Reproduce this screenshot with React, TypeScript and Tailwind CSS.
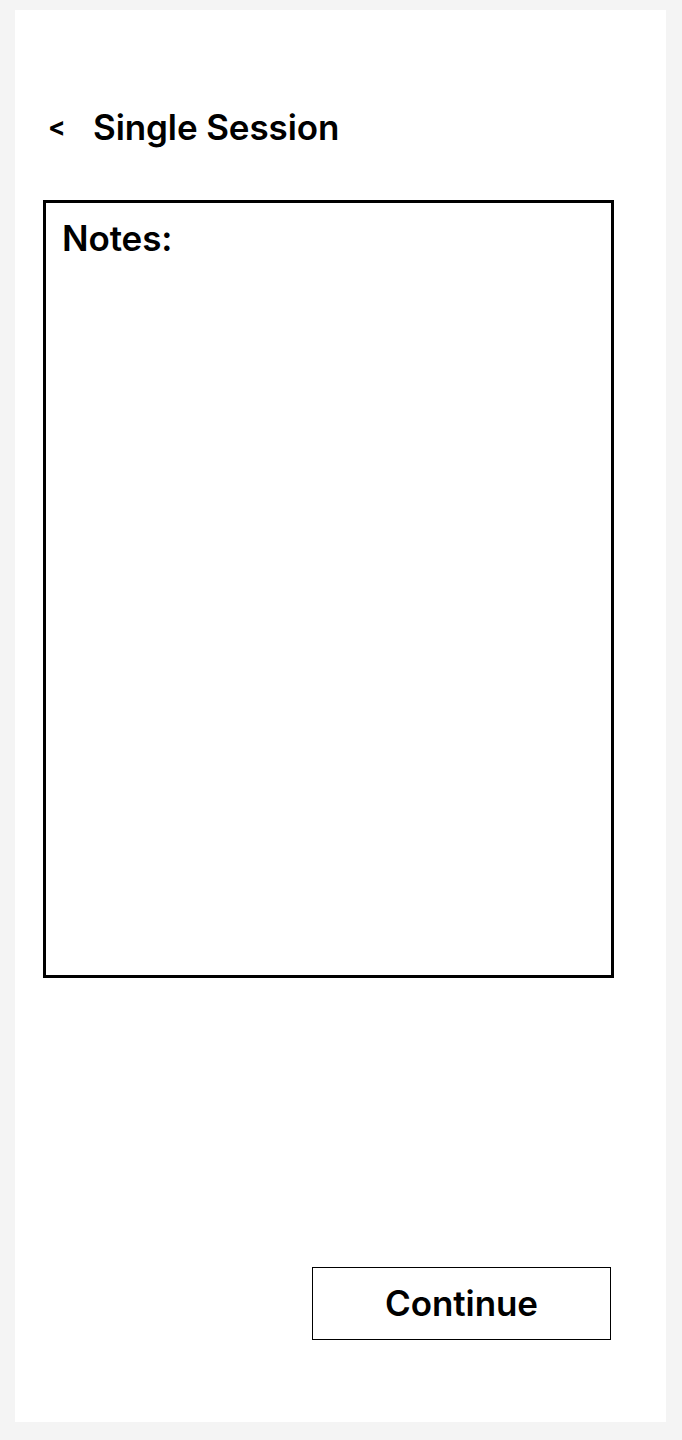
import React from "react";

export default function App() {
  return (
    <div
      className="min-h-[1440px] w-[682px] bg-[#f4f4f4] pt-[10px] pl-[15px] pr-[16px] pb-[18px]"
      style={{ fontFamily: "Inter, 'Noto Sans', sans-serif" }}
    >
      <div className="flex h-[1412px] flex-col bg-white">
        {/* header */}
        <div className="mt-[97px] flex h-[40px] items-center pl-[33px] text-black">
          <span className="w-[45px] text-[26px] font-bold leading-none">&lt;</span>
          <h1 className="text-[35px] font-semibold leading-none tracking-[-0.1px]">Single Session</h1>
        </div>

        {/* notes area */}
        <div className="ml-[28px] mt-[53px] h-[778px] w-[571px] border-[3px] border-black px-[16px] pt-[18px]">
          <p className="text-[35px] font-semibold leading-none tracking-[-0.1px] text-black">Notes:</p>
        </div>

        <div className="flex-1" />

        {/* footer action */}
        <div className="mb-[82px] flex justify-end pr-[55px]">
          <button className="flex h-[73px] w-[299px] items-center justify-center border border-black bg-white text-[35px] font-semibold leading-none tracking-[-0.1px] text-black">
            Continue
          </button>
        </div>
      </div>
    </div>
  );
}
